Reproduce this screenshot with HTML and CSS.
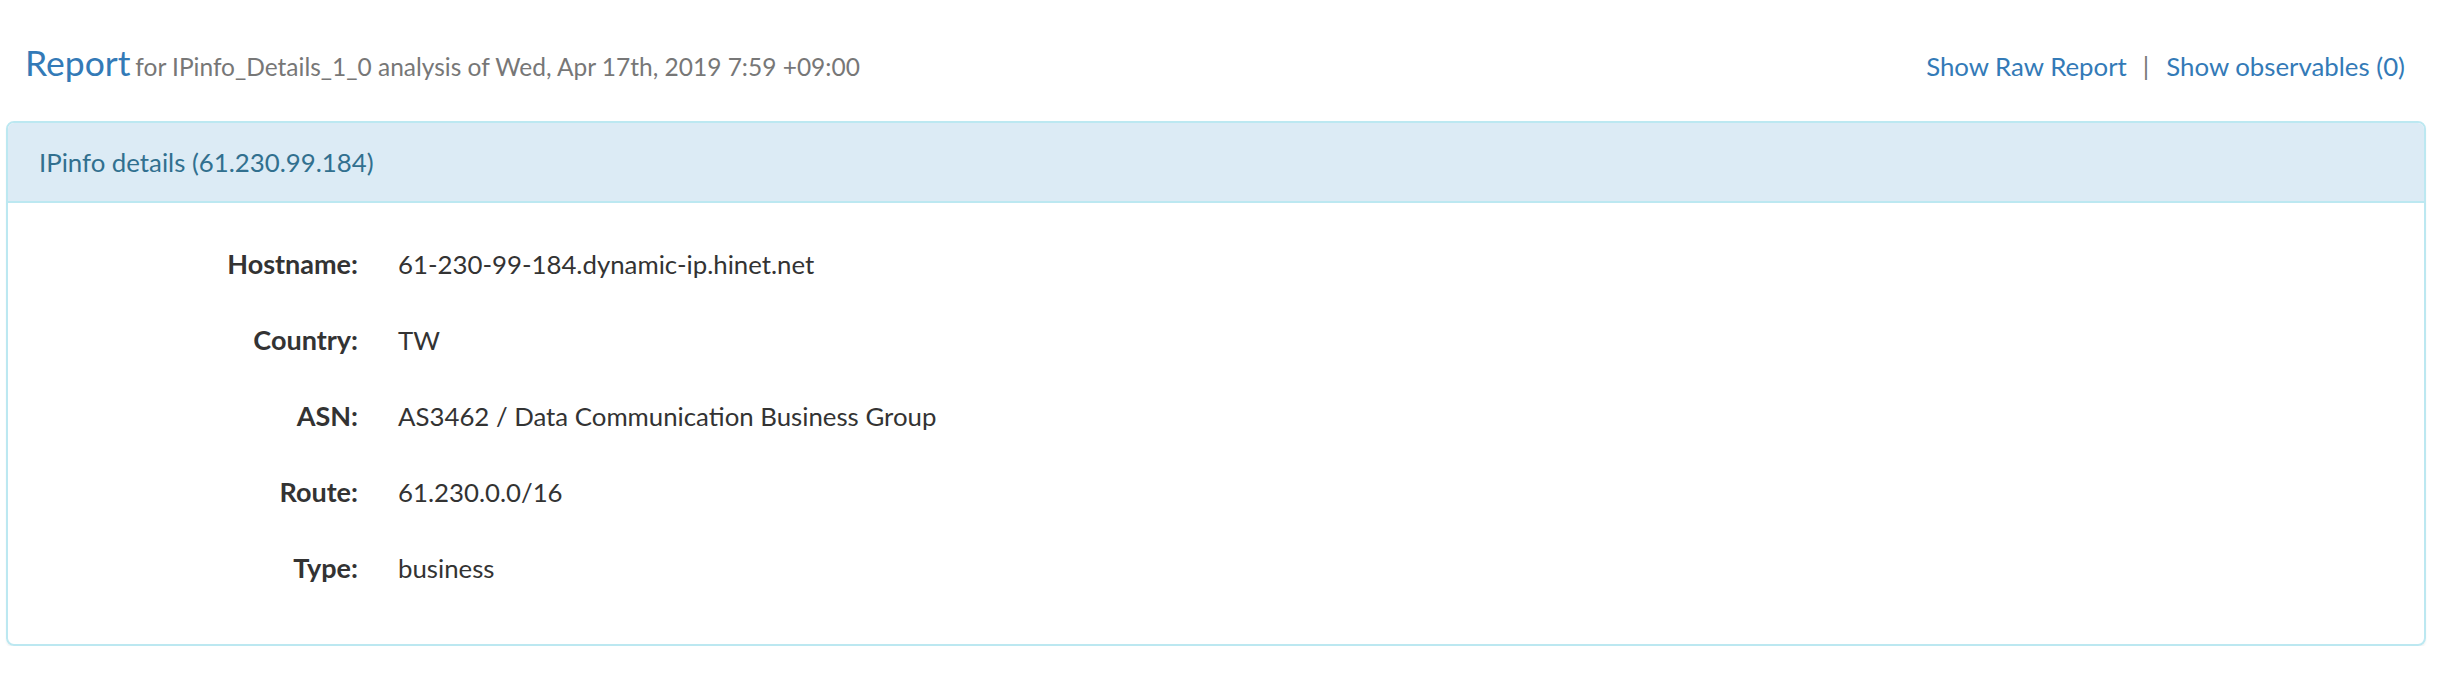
FILE: index.html
```html
<!DOCTYPE html>
<html lang="en">
<head>
<meta charset="utf-8">
<title>Report</title>
<link rel="stylesheet" href="styles.css">
</head>
<body>
<div class="page">
  <div class="report-header">
    <h3 class="title"><span class="title-main">Report</span> <small class="title-sub">for IPinfo_Details_1_0 analysis of Wed, Apr 17th, 2019 7:59 +09:00</small></h3>
    <div class="links">
      <a class="link" href="#">Show Raw Report</a>
      <span class="sep">|</span>
      <a class="link" href="#">Show observables (0)</a>
    </div>
  </div>
  <div class="panel">
    <div class="panel-heading">
      <h4 class="panel-title">IPinfo details (61.230.99.184)</h4>
    </div>
    <div class="panel-body">
      <dl class="details">
        <dt>Hostname:</dt><dd>61-230-99-184.dynamic-ip.hinet.net</dd>
        <dt>Country:</dt><dd>TW</dd>
        <dt>ASN:</dt><dd>AS3462 / Data Communication Business Group</dd>
        <dt>Route:</dt><dd>61.230.0.0/16</dd>
        <dt>Type:</dt><dd>business</dd>
      </dl>
    </div>
  </div>
</div>
</body>
</html>
```
FILE: styles.css
```css
* { box-sizing: border-box; }
html, body { margin: 0; padding: 0; background: #fff; }
body {
  font-family: Lato, "Open Sans", sans-serif;
  color: #333;
}
.page {
  padding: 0 12px 0 6px;
}
.report-header {
  display: flex;
  justify-content: space-between;
  align-items: baseline;
  height: 121px;
  padding: 43px 21px 0 19px;
}
.title {
  margin: 0;
  font-weight: 400;
  line-height: 40px;
  white-space: nowrap;
}
.title-main {
  font-size: 35.5px;
  color: #337ab7;
}
.title-sub {
  font-size: 24.5px;
  color: #777;
}
.links {
  display: flex;
  align-items: baseline;
  font-size: 25.8px;
  white-space: nowrap;
}
.link {
  color: #337ab7;
  text-decoration: none;
}
.sep {
  color: #777;
  margin: 0 17px 0 16px;
}
.panel {
  border: 2px solid #bce8f1;
  border-radius: 8px;
  box-shadow: 0 2px 2px rgba(0, 0, 0, 0.05);
  overflow: hidden;
}
.panel-heading {
  display: flex;
  align-items: center;
  height: 80px;
  padding: 0 31px;
  background: #dcebf5;
  border-bottom: 2px solid #bce8f1;
}
.panel-title {
  margin: 0;
  font-weight: 400;
  font-size: 25.8px;
  color: #31708f;
}
.panel-body {
  padding: 41px 30px 56px 30px;
}
.details {
  margin: 0;
  display: grid;
  grid-template-columns: 320px 1fr;
  column-gap: 40px;
  row-gap: 36px;
  font-size: 27px;
  line-height: 40px;
}
.details dt {
  font-weight: 700;
  text-align: right;
}
.details dd {
  margin: 0;
  font-size: 25.8px;
}
```
